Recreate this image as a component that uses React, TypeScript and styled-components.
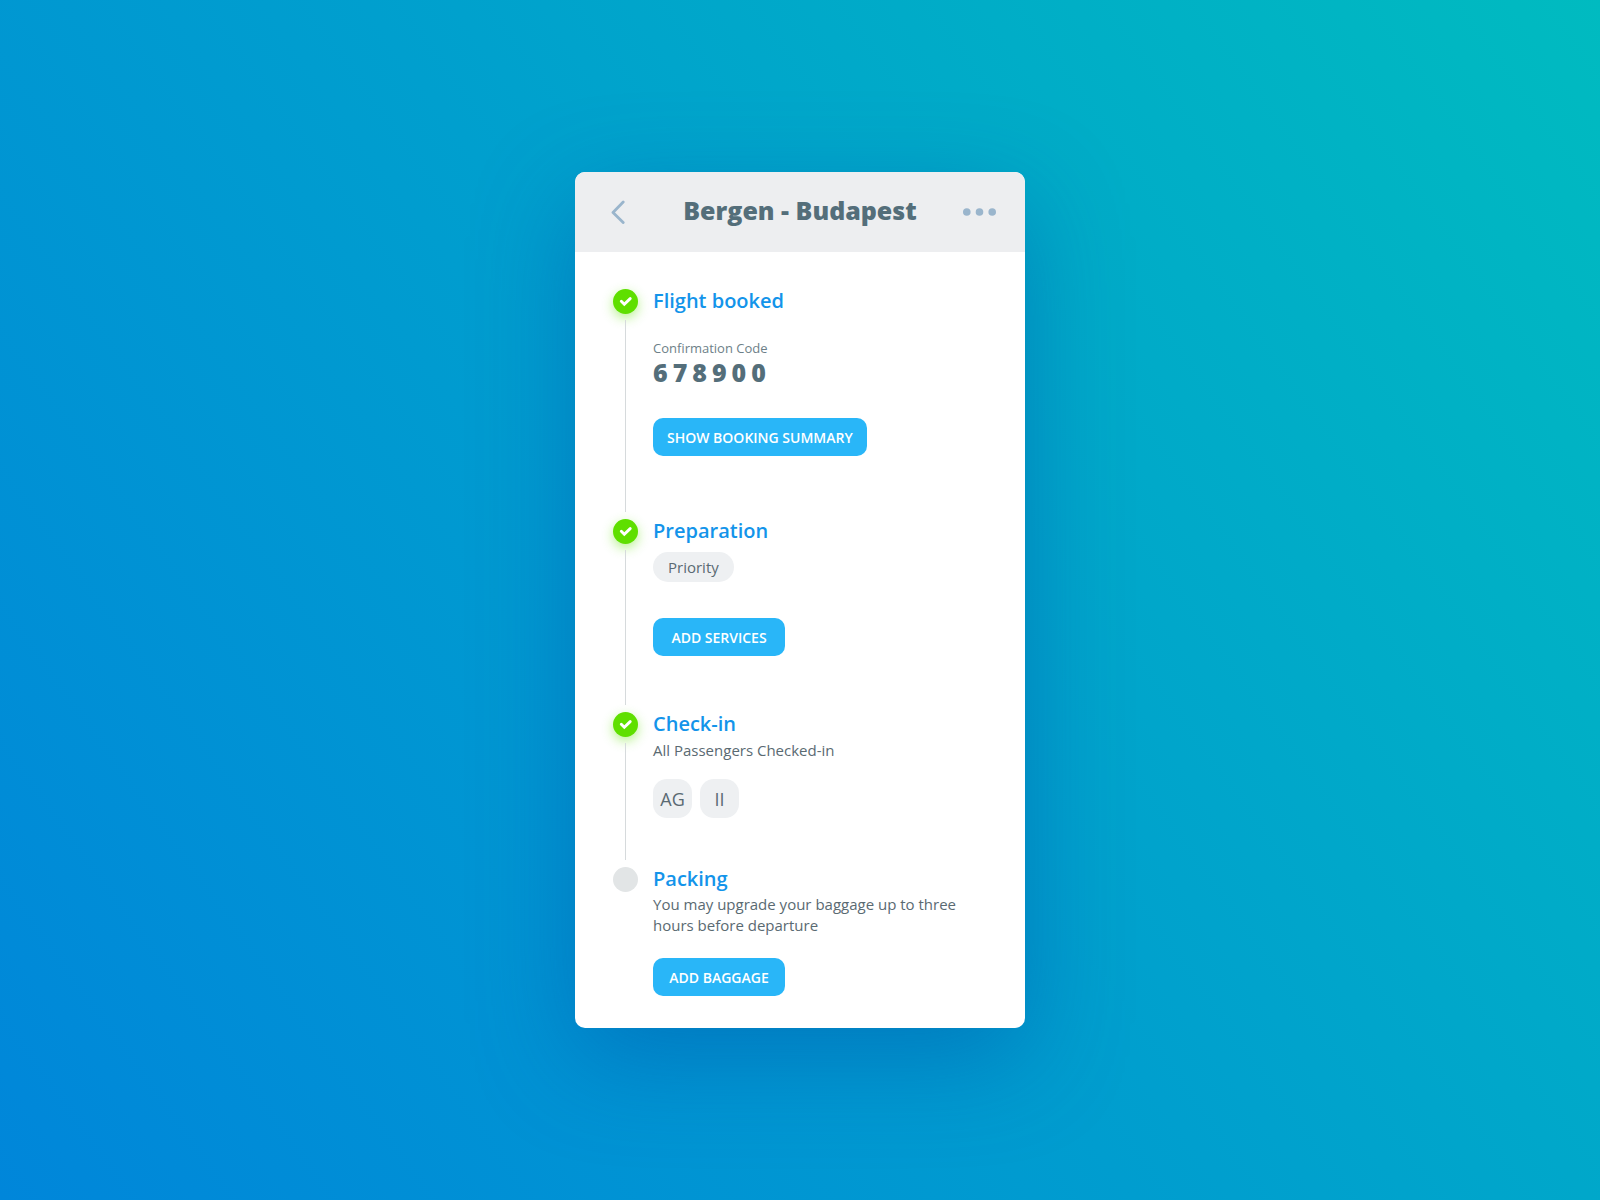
import React from "react";
import styled, { createGlobalStyle, css } from "styled-components";

const GlobalStyle = createGlobalStyle`
  *, *::before, *::after {
    box-sizing: border-box;
  }

  body {
    margin: 0;
    font-family: "Open Sans", "Noto Sans", sans-serif;
    color: #5a6a72;
  }

  h1, h2, p, ol, ul {
    margin: 0;
    padding: 0;
    font-weight: 400;
    list-style: none;
  }

  button {
    border: 0;
    font-family: inherit;
    cursor: pointer;
  }
`;

const Page = styled.div`
  display: flex;
  align-items: center;
  justify-content: center;
  min-height: 100vh;
  padding: 24px;
  background: linear-gradient(54deg, #0086da 0%, #009fce 50%, #00bbc0 100%);
`;

const Card = styled.main`
  width: 100%;
  max-width: 450px;
  overflow: hidden;
  border-radius: 10px;
  background: #fff;
  box-shadow: 0 30px 100px rgba(0, 76, 168, 0.42);
`;

const Header = styled.header`
  display: grid;
  grid-template-columns: 1fr auto 1fr;
  align-items: center;
  height: 80px;
  padding: 0 29px;
  background: #edeef0;
`;

const RouteTitle = styled.h1`
  padding-bottom: 5px;
  font-size: 25px;
  font-weight: 800;
  line-height: 34px;
  color: #546e7a;
`;

const IconButton = styled.button<{ $align: "start" | "end" }>`
  display: flex;
  justify-self: ${({ $align }) => $align};
  padding: ${({ $align }) => ($align === "start" ? "8px 7px" : "8px 0")};
  background: none;
  color: #9ab5cc;
`;

const Timeline = styled.ol`
  padding: 37px 38px 32px;
`;

const Step = styled.li`
  display: flex;
  gap: 15px;
`;

const Rail = styled.div`
  display: flex;
  flex-direction: column;
  align-items: center;
  gap: 6px;
  padding-bottom: 7px;
`;

const Marker = styled.span<{ $done: boolean }>`
  display: flex;
  width: 25px;
  height: 25px;
  border-radius: 50%;
  background: #e2e5e6;
  ${({ $done }) =>
    $done &&
    css`
      background: #5fdf00;
      box-shadow: 0 4px 12px rgba(95, 223, 0, 0.45);
    `}
`;

const Line = styled.span`
  flex: 1;
  width: 1px;
  background: #d6dadc;
`;

const Body = styled.div<{ $after: number }>`
  flex: 1;
  padding-bottom: ${({ $after }) => $after}px;
`;

const StepTitle = styled.h2`
  font-size: 20px;
  font-weight: 600;
  line-height: 24px;
  color: #1394ea;
`;

const Details = styled.div<{ $before: number; $after: number }>`
  padding: ${({ $before, $after }) => `${$before}px 0 ${$after}px`};
`;

const CodeLabel = styled.p`
  font-size: 13px;
  line-height: 18px;
  color: #6d7f88;
`;

const Code = styled.p`
  font-size: 25px;
  font-weight: 800;
  line-height: 30px;
  letter-spacing: 5px;
  color: #546e7a;
`;

const Text = styled.p`
  font-size: 15px;
  line-height: 21px;
`;

const Tag = styled.span`
  display: flex;
  align-items: center;
  width: fit-content;
  height: 30px;
  padding: 0 15px;
  border-radius: 15px;
  background: #eef0f2;
  font-size: 15px;
`;

const Passengers = styled.ul`
  display: flex;
  gap: 8px;
  padding-top: 18px;
`;

const Passenger = styled.li`
  display: flex;
  align-items: center;
  justify-content: center;
  width: 39px;
  height: 39px;
  border-radius: 14px;
  background: #eef0f2;
  font-size: 18px;
`;

const Action = styled.button`
  display: block;
  min-width: 132px;
  height: 38px;
  padding: 0 14px;
  border-radius: 10px;
  background: #29b6f8;
  font-size: 14px;
  font-weight: 600;
  text-transform: uppercase;
  color: #fff;
`;

type StepItemProps = {
  title: string;
  done?: boolean;
  last?: boolean;
  before: number;
  between?: number;
  after?: number;
  action?: string;
  children: React.ReactNode;
};

function StepItem({ title, done = false, last = false, before, between = 0, after = 0, action, children }: StepItemProps) {
  return (
    <Step>
      <Rail>
        <Marker $done={done}>
          {done && (
            <svg width="25" height="25" viewBox="0 0 25 25" fill="none" aria-label="Done">
              <path d="M8.3 12.2l3 3 5.9-5.6" stroke="#fff" strokeWidth="2.9" strokeLinecap="round" />
            </svg>
          )}
        </Marker>
        {!last && <Line />}
      </Rail>
      <Body $after={after}>
        <StepTitle>{title}</StepTitle>
        <Details $before={before} $after={between}>
          {children}
        </Details>
        {action && <Action type="button">{action}</Action>}
      </Body>
    </Step>
  );
}

export default function App() {
  return (
    <>
      <GlobalStyle />
      <Page>
        <Card>
          <Header>
            <IconButton type="button" $align="start" aria-label="Back">
              <svg width="14" height="24" viewBox="0 0 14 24" fill="none">
                <path d="M12.2 2L2 12.400l10.200 10.200" stroke="currentColor" strokeWidth="2.800" strokeLinecap="round" strokeLinejoin="round" />
              </svg>
            </IconButton>
            <RouteTitle>Bergen - Budapest</RouteTitle>
            <IconButton type="button" $align="end" aria-label="More options">
              <svg width="33" height="8" viewBox="0 0 33 8" fill="currentColor">
                <circle cx="3.800" cy="4" r="3.800" />
                <circle cx="16.500" cy="4" r="3.800" />
                <circle cx="29.200" cy="4" r="3.800" />
              </svg>
            </IconButton>
          </Header>
          <Timeline>
            <StepItem done title="Flight booked" before={26} between={31} after={63} action="Show booking summary">
              <CodeLabel>Confirmation Code</CodeLabel>
              <Code>678900</Code>
            </StepItem>
            <StepItem done title="Preparation" before={9} between={36} after={56} action="Add services">
              <Tag>Priority</Tag>
            </StepItem>
            <StepItem done title="Check-in" before={4} after={49}>
              <Text>All Passengers Checked-in</Text>
              <Passengers>
                <Passenger>AG</Passenger>
                <Passenger>II</Passenger>
              </Passengers>
            </StepItem>
            <StepItem last title="Packing" before={3} between={22} action="Add baggage">
              <Text>You may upgrade your baggage up to three hours before departure</Text>
            </StepItem>
          </Timeline>
        </Card>
      </Page>
    </>
  );
}
